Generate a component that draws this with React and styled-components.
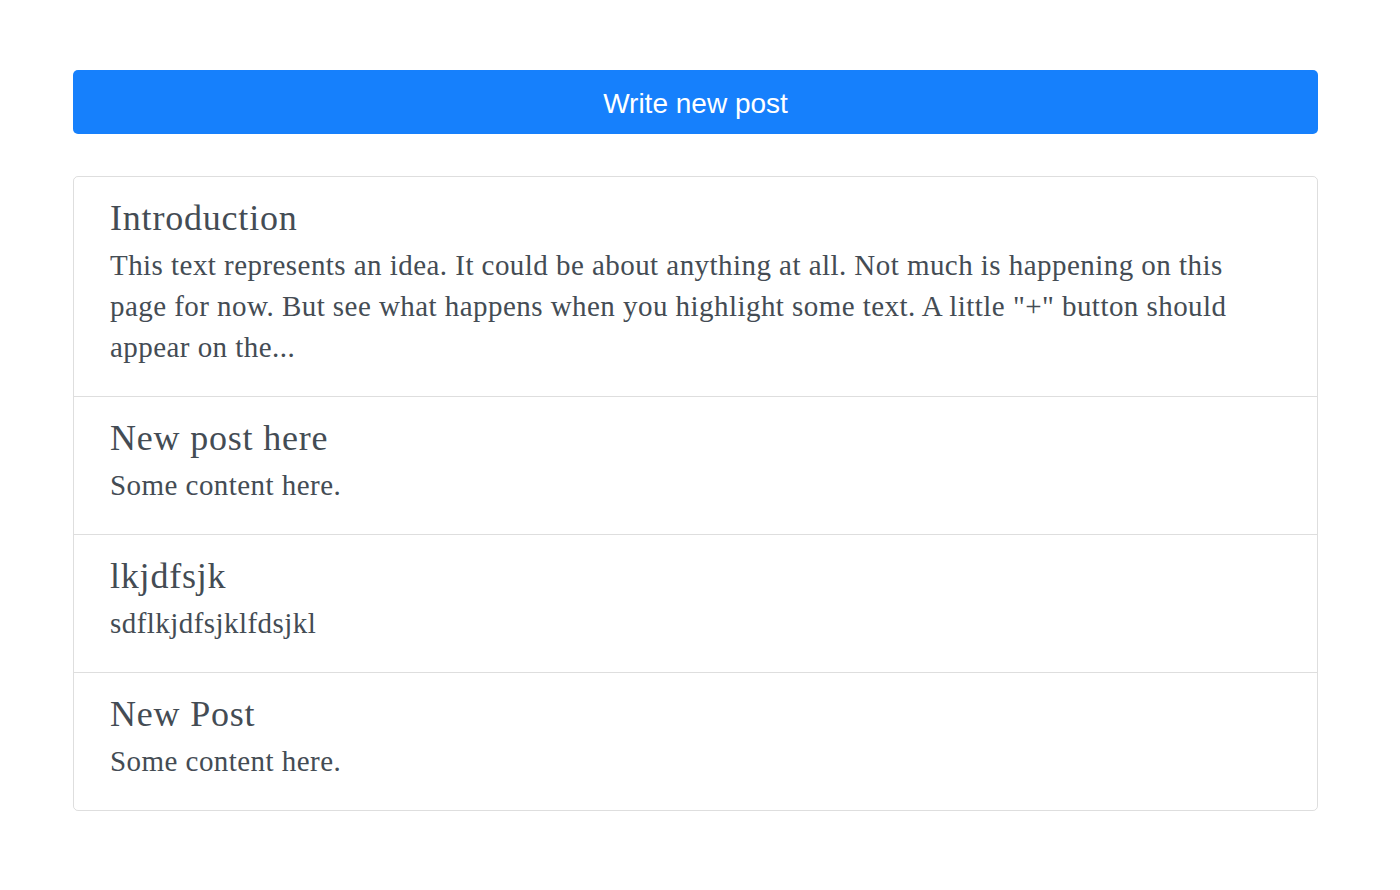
import React from "react";
import styled, { createGlobalStyle } from "styled-components";

const Global = createGlobalStyle`
  html, body { margin: 0; padding: 0; background: #fff; }
  body { font-family: "Liberation Serif", serif; color: #444c54; }
`;

const Page = styled.main`
  width: 1245px;
  margin-left: 73px;
  padding-top: 70px;
  display: flex;
  flex-direction: column;
  gap: 42px;
`;

const WriteButton = styled.button`
  height: 64px;
  width: 100%;
  border: none;
  border-radius: 5px;
  background: #1680fc;
  color: #fff;
  font-family: "Liberation Sans", Arial, sans-serif;
  font-size: 28px;
  padding: 3px 0 0;
  cursor: pointer;
`;

const PostList = styled.ul`
  list-style: none;
  margin: 0;
  padding: 0;
  border: 1px solid rgba(0, 0, 0, 0.13);
  border-radius: 5px;
  display: flex;
  flex-direction: column;
`;

const PostItem = styled.li`
  padding: 21px 66px 28px 36px;
  & + & { border-top: 1px solid rgba(0, 0, 0, 0.13); }
`;

const PostTitle = styled.h4`
  margin: 0 0 7px;
  font-weight: 400;
  font-size: 36px;
  letter-spacing: 0.8px;
  line-height: 40px;
`;

const PostBody = styled.p`
  margin: 0;
  font-size: 29px;
  letter-spacing: 0.45px;
  line-height: 41px;
`;

const posts = [
  {
    title: "Introduction",
    body:
      'This text represents an idea. It could be about anything at all. Not much is happening on this page for now. But see what happens when you highlight some text. A little "+" button should appear on the...',
  },
  { title: "New post here", body: "Some content here." },
  { title: "lkjdfsjk", body: "sdflkjdfsjklfdsjkl" },
  { title: "New Post", body: "Some content here." },
];

export default function App() {
  return (
    <>
      <Global />
      <Page>
        <WriteButton>Write new post</WriteButton>
        <PostList>
          {posts.map((p, i) => (
            <PostItem key={i}>
              <PostTitle>{p.title}</PostTitle>
              <PostBody>{p.body}</PostBody>
            </PostItem>
          ))}
        </PostList>
      </Page>
    </>
  );
}
